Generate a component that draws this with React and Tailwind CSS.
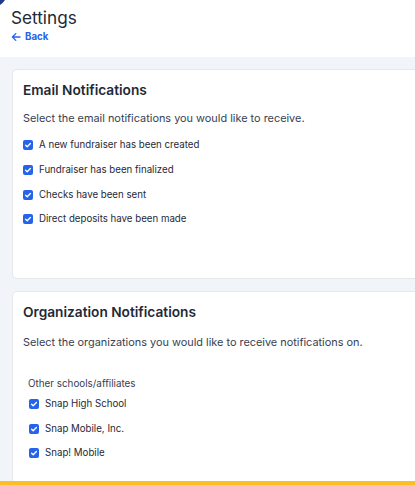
import React from "react";

function Check({ label }) {
  return (
    <label className="flex items-center h-[16px] gap-[6px]">
      <span className="w-[10px] h-[10px] rounded-[2px] bg-[#2563eb] flex items-center justify-center shrink-0">
        <svg width="8" height="8" viewBox="0 0 8 8" fill="none">
          <path d="M1.6 4.2 L3.2 5.7 L6.4 2.4" stroke="white" strokeWidth="1.4" strokeLinecap="round" strokeLinejoin="round" />
        </svg>
      </span>
      <span className="text-[9.7px] leading-[16px] text-[#1f2937]">{label}</span>
    </label>
  );
}

export default function App() {
  return (
    <div className="relative w-[415px] h-[485px] overflow-hidden bg-[#f1f4f8]" style={{ fontFamily: "Inter, 'Noto Sans', sans-serif" }}>
      <svg className="absolute left-0 top-0" width="6" height="6" viewBox="0 0 6 6">
        <path d="M0 0 L5 0 Q3 3 0 5 Z" fill="#1e3a8a" />
      </svg>
      <div className="h-[57px] bg-white pl-[11px] pt-[6px]">
        <div className="text-[17.2px] leading-[24px] text-[#1f2937]">Settings</div>
        <div className="flex items-center gap-[4px] h-[14px] text-[#2563eb]">
          <svg width="10" height="10" viewBox="0 0 10 10" fill="none">
            <path d="M9 5 H1.5 M4.8 1.6 L1.4 5 L4.8 8.4" stroke="#2563eb" strokeWidth="1.3" strokeLinecap="round" strokeLinejoin="round" />
          </svg>
          <span className="text-[9.7px] leading-[14px] font-bold">Back</span>
        </div>
      </div>
      <div className="pt-[12px] pl-[12px] flex flex-col gap-[12px] mr-[-10px]">
        <div className="h-[210px] bg-white border border-[#e5e7eb] rounded-[5px] pl-[10px] pt-[10px]">
          <div className="text-[13.7px] leading-[20px] font-semibold text-[#1f2937]">Email Notifications</div>
          <div className="mt-[10px] text-[10.9px] leading-[16px] text-[#374151]">Select the email notifications you would like to receive.</div>
          <div className="mt-[11px] flex flex-col gap-[8.8px]">
            <Check label="A new fundraiser has been created" />
            <Check label="Fundraiser has been finalized" />
            <Check label="Checks have been sent" />
            <Check label="Direct deposits have been made" />
          </div>
        </div>
        <div className="h-[220px] bg-white border border-[#e5e7eb] rounded-[5px] pl-[10px] pt-[10px]">
          <div className="text-[13.7px] leading-[20px] font-semibold text-[#1f2937]">Organization Notifications</div>
          <div className="mt-[12px] text-[10.9px] leading-[16px] text-[#374151]">Select the organizations you would like to receive notifications on.</div>
          <div className="pl-[5px]">
            <div className="mt-[26px] text-[9.85px] leading-[14px] text-[#374151]">Other schools/affiliates</div>
            <div className="mt-[6px] flex flex-col gap-[8.5px] pl-[1px]">
              <Check label="Snap High School" />
              <Check label="Snap Mobile, Inc." />
              <Check label="Snap! Mobile" />
            </div>
          </div>
        </div>
      </div>
      <div className="absolute left-0 right-0 bottom-0 h-[4px] bg-[#fbbf24]" />
    </div>
  );
}
